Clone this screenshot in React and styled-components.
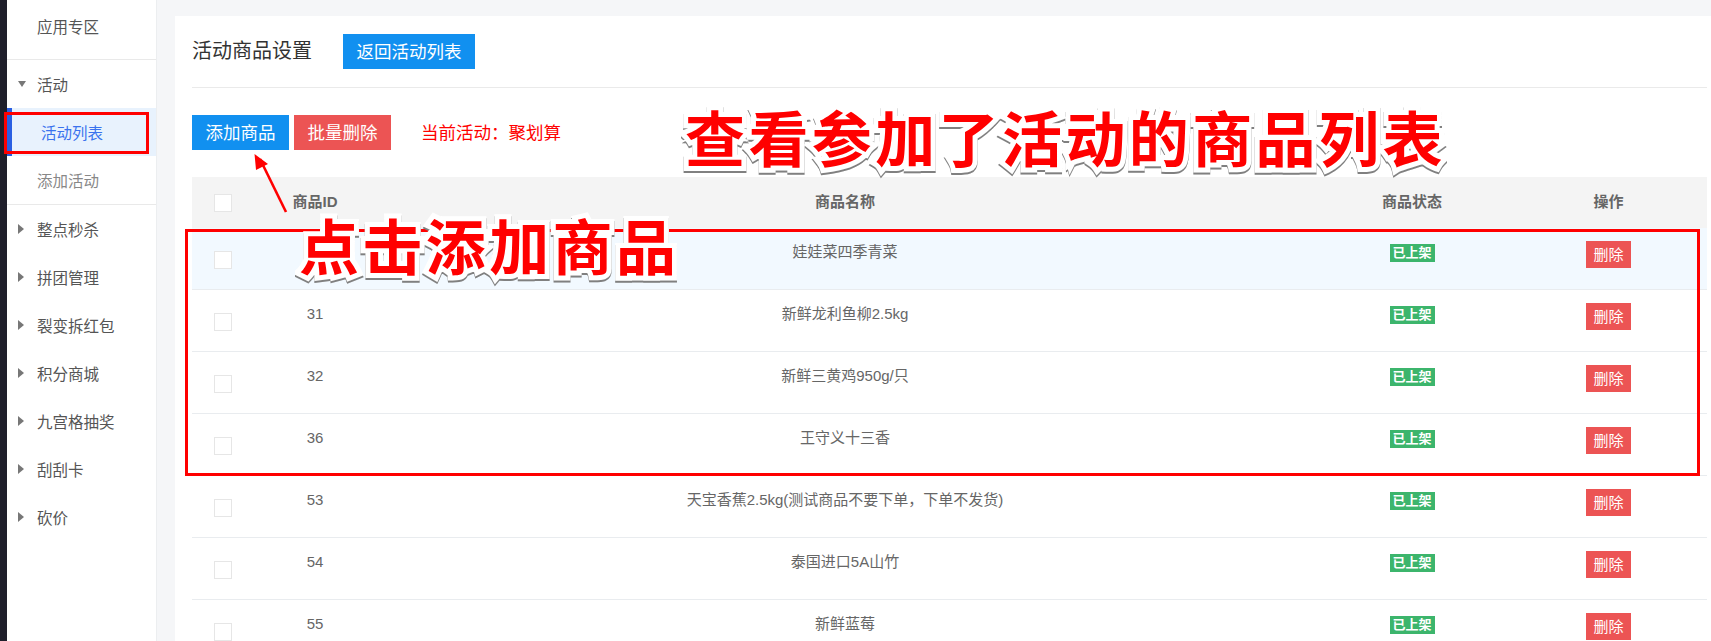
import React from 'react'
import styled, { createGlobalStyle } from 'styled-components'

const GlobalStyle = createGlobalStyle`
  html, body {
    margin: 0;
    padding: 0;
    height: 641px;
    overflow: hidden;
    background: #f5f6f8;
  }
  * {
    box-sizing: border-box;
  }
`

const sans = `"Liberation Sans", "Noto Sans CJK SC", sans-serif`

const menu = ['整点秒杀', '拼团管理', '裂变拆红包', '积分商城', '九宫格抽奖', '刮刮卡', '砍价']

const goods = [
  { id: '', name: '娃娃菜四季青菜', hover: true },
  { id: '31', name: '新鲜龙利鱼柳2.5kg' },
  { id: '32', name: '新鲜三黄鸡950g/只' },
  { id: '36', name: '王守义十三香' },
  { id: '53', name: '天宝香蕉2.5kg(测试商品不要下单，下单不发货)' },
  { id: '54', name: '泰国进口5A山竹' },
  { id: '55', name: '新鲜蓝莓' },
]

const App = () => {
  return (
    <Page>
      <GlobalStyle />
      <Rail />
      <Sidebar>
        <SideTop>应用专区</SideTop>
        <SideGroup>
          <SideRow>
            <Caret $open />
            活动
          </SideRow>
          <SubItem $active>活动列表</SubItem>
          <SubItem>添加活动</SubItem>
        </SideGroup>
        {menu.map((m) => (
          <SideRow key={m}>
            <Caret />
            {m}
          </SideRow>
        ))}
      </Sidebar>

      <Main>
        <Card>
          <TitleBar>
            <Title>活动商品设置</Title>
            <BlueButton $wide>返回活动列表</BlueButton>
          </TitleBar>

          <Toolbar>
            <BlueButton>添加商品</BlueButton>
            <RedButton>批量删除</RedButton>
            <Current>当前活动：聚划算</Current>
          </Toolbar>

          <Table>
            <HeadRow>
              <CheckCell>
                <Check />
              </CheckCell>
              <HeadCell>商品ID</HeadCell>
              <HeadCell>商品名称</HeadCell>
              <HeadCell>商品状态</HeadCell>
              <HeadCell>操作</HeadCell>
            </HeadRow>
            {goods.map((g) => (
              <Row key={g.id + g.name} $hover={g.hover}>
                <CheckCell>
                  <Check />
                </CheckCell>
                <Cell>{g.id}</Cell>
                <Cell>{g.name}</Cell>
                <Cell>
                  <Tag>已上架</Tag>
                </Cell>
                <Cell>
                  <DeleteButton>删除</DeleteButton>
                </Cell>
              </Row>
            ))}
          </Table>
        </Card>
      </Main>

      <MenuMark />
      <RowsMark />
      <Arrow viewBox="0 0 50 70" fill="none">
        <path d="M33 59 L7 6" stroke="#f00" strokeWidth="2.6" />
        <path d="M1.5 1 L3 17 L15 11 Z" fill="#f00" />
      </Arrow>
      <BigNote $x={685} $y={101}>查看参加了活动的商品列表</BigNote>
      <BigNote $x={299} $y={209}>点击添加商品</BigNote>
    </Page>
  )
}

const Page = styled.div`
  position: relative;
  display: flex;
  width: 1711px;
  height: 641px;
  overflow: hidden;
  font-family: ${sans};
  background: #f5f6f8;
`

const Rail = styled.div`
  flex: 0 0 7px;
  background: #1f1f2b;
`

const Sidebar = styled.nav`
  flex: 0 0 150px;
  background: #fff;
  border-right: 1px solid #eceef0;
  color: #555;
  font-size: 15.5px;
`

const SideTop = styled.div`
  display: flex;
  align-items: center;
  height: 60px;
  padding: 0 0 7px 30px;
  border-bottom: 1px solid #e9e9e9;
`

const SideGroup = styled.div`
  border-bottom: 1px solid #e9e9e9;
`

const SideRow = styled.div`
  display: flex;
  align-items: center;
  height: 48px;
  padding-left: 11px;
  padding-bottom: 1px;
`

const Caret = styled.i`
  height: 0;
  ${(p) =>
    p.$open
      ? `
    width: 8px;
    margin-right: 11px;
    border-top: 6px solid #777;
    border-left: 4px solid transparent;
    border-right: 4px solid transparent;
  `
      : `
    width: 6px;
    margin-right: 13px;
    border-top: 5px solid transparent;
    border-bottom: 5px solid transparent;
    border-left: 6px solid #777;
  `}
`

const SubItem = styled.div`
  display: flex;
  align-items: center;
  height: 48px;
  padding-left: ${(p) => (p.$active ? '29px' : '30px')};
  padding-bottom: 1px;
  color: ${(p) => (p.$active ? '#3a72ee' : '#888')};
  ${(p) =>
    p.$active &&
    `
    background: #e8f2fd;
    border-left: 5px solid #2a5fe2;
  `}
`

const Main = styled.main`
  flex: 1;
  padding: 16px 0 0 18px;
`

const Card = styled.section`
  height: 100%;
  padding: 18px 4px 0 17px;
  background: #fff;
`

const TitleBar = styled.header`
  display: flex;
  align-items: center;
  gap: 31px;
  padding-bottom: 18px;
  border-bottom: 1px solid #eaeaea;
`

const Title = styled.h2`
  margin: 0 0 4px;
  font-size: 20px;
  font-weight: 400;
  color: #333;
`

const Button = styled.button`
  height: 35px;
  padding: 0 0 2px;
  border: 0;
  color: #fff;
  font-family: ${sans};
  font-size: 17.5px;
`

const BlueButton = styled(Button)`
  width: ${(p) => (p.$wide ? '132px' : '97px')};
  background: #1190f0;
`

const RedButton = styled(Button)`
  width: 97px;
  background: #ec5454;
`

const Toolbar = styled.div`
  display: flex;
  align-items: center;
  gap: 5px;
  margin: 27px 0;
`

const Current = styled.span`
  margin-left: 25px;
  margin-bottom: 2px;
  color: #f00;
  font-size: 17.5px;
`

const columns = '62px 122px 938px 196px 197px'

const HeadRow = styled.div`
  display: grid;
  grid-template-columns: ${columns};
  height: 51px;
  background: #f4f4f4;
`

const Table = styled.div`
  width: 1515px;
`

const Row = styled.div`
  display: grid;
  grid-template-columns: ${columns};
  height: 62px;
  border-bottom: 1px solid #e9ecef;
  background: ${(p) => (p.$hover ? '#f2f9ff' : '#fff')};
  color: #666;
  font-size: 15px;
`

const HeadCell = styled.div`
  padding-top: 13px;
  text-align: center;
  color: #666;
  font-size: 15px;
  font-weight: 700;
`

const Cell = styled.div`
  padding-top: 13px;
  line-height: 21px;
  text-align: center;
`

const CheckCell = styled.div`
  padding: 17px 0 0 22px;
  ${Row} & {
    padding-top: 23px;
  }
`

const Check = styled.span`
  display: block;
  width: 18px;
  height: 18px;
  border: 1.5px solid #e6e6e6;
  background: #fff;
`

const Tag = styled.span`
  display: inline-block;
  width: 45px;
  height: 18px;
  margin-top: 3px;
  background: #3cb56c;
  color: #fff;
  font-size: 13px;
  font-weight: 700;
  line-height: 18px;
`

const DeleteButton = styled.button`
  width: 45px;
  height: 27px;
  padding: 0 0 2px;
  border: 0;
  background: #ec5454;
  color: #fff;
  font-family: ${sans};
  font-size: 15px;
`

const MenuMark = styled.div`
  position: absolute;
  left: 4px;
  top: 112px;
  width: 145px;
  height: 42px;
  border: 3px solid #f00;
`

const RowsMark = styled.div`
  position: absolute;
  left: 185px;
  top: 229px;
  width: 1515px;
  height: 247px;
  border: 3px solid #f00;
`

const Arrow = styled.svg`
  position: absolute;
  left: 253px;
  top: 153px;
  width: 50px;
  height: 70px;
`

const BigNote = styled.div`
  position: absolute;
  left: ${(p) => p.$x}px;
  top: ${(p) => p.$y}px;
  color: #f00;
  font-family: "Noto Sans CJK SC", sans-serif;
  font-size: 60px;
  font-weight: 700;
  letter-spacing: 3.4px;
  line-height: 70px;
  white-space: nowrap;
  -webkit-text-stroke: 10px #fff;
  paint-order: stroke fill;
  filter: drop-shadow(0 2px 0.5px #808080);
`

export default App
